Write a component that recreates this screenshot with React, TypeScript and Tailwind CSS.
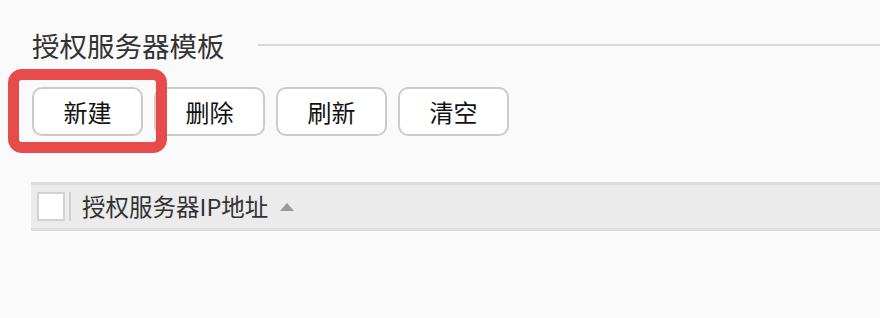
import React from "react";

const font = { fontFamily: '"Noto Sans CJK SC", "Noto Sans", sans-serif' };

export default function App() {
  return (
    <main
      className="w-[880px] h-[318px] bg-[#fafafa] overflow-hidden pl-[32px] pt-[26px]"
      style={font}
    >
      {/* TITLE */}
      <div className="flex items-center">
        <h2 className="text-[27.5px] leading-[38px] text-[#333]">授权服务器模板</h2>
        <div className="flex-1 ml-[33px] h-[2px] bg-[#d9d9d9]" />
      </div>

      {/* TOOLBAR */}
      <div className="flex gap-[11px] mt-[23px]">
        <div className="relative">
          <ToolButton label="新建" />
          <div className="absolute -left-[24px] -top-[18px] w-[159px] h-[84px] rounded-[14px] border-[11px] border-[#e74b4b] pointer-events-none" />
        </div>
        <ToolButton label="删除" />
        <ToolButton label="刷新" />
        <ToolButton label="清空" />
      </div>

      {/* TABLE HEADER */}
      <div className="-ml-[1px] mt-[46px] border-y-[3px] border-[#dddddd] bg-[#ebebeb] h-[49px] flex items-center">
        <div className="ml-[6px] w-[28px] h-[29px] bg-white border-2 border-[#d2d2d2]" />
        <div className="ml-[4px] w-[2px] h-[29px] bg-[#cfcfcf]" />
        <span className="ml-[11px] text-[23.5px] text-[#333] leading-none">授权服务器IP地址</span>
        <svg className="ml-[12px]" width="14" height="8" viewBox="0 0 14 8">
          <path d="M7 0 L14 8 L0 8 Z" fill="#9a9a9a" />
        </svg>
      </div>
    </main>
  );
}

function ToolButton({ label }: { label: string }) {
  return (
    <button className="w-[111px] h-[49px] rounded-[10px] border-2 border-[#cbcbcb] bg-white text-[24px] text-[#111] leading-none">
      {label}
    </button>
  );
}
